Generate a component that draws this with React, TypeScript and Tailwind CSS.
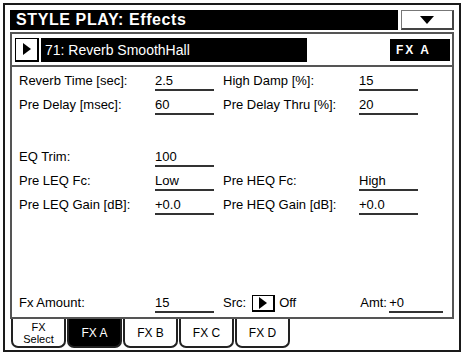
import React from "react";

const font = { fontFamily: '"Liberation Sans", Arial, sans-serif' };

function Field({ label, value }: { label: string; value: string }) {
  return (
    <>
      <div className="w-[136px] shrink-0">{label}</div>
      <div className="w-[59px] shrink-0 h-[20px] border-b-2 border-[#333] leading-[20px]">{value}</div>
    </>
  );
}

function Row({ a, b }: { a: [string, string]; b?: [string, string] }) {
  return (
    <div className="flex items-start h-[24px]">
      <Field label={a[0]} value={a[1]} />
      {b && (
        <div className="flex ml-[9px]">
          <Field label={b[0]} value={b[1]} />
        </div>
      )}
    </div>
  );
}

function PlayBox({ className = "" }: { className?: string }) {
  return (
    <div className={`flex items-center justify-center bg-white border border-black border-r-2 border-b-2 ${className}`}>
      <svg width="8" height="12" viewBox="0 0 8 12">
        <polygon points="0,0 8,6 0,12" fill="#000" />
      </svg>
    </div>
  );
}

const tabs = ["FX Select", "FX A", "FX B", "FX C", "FX D"];

export default function App() {
  return (
    <div className="w-[464px] h-[356px] bg-white pt-[3px] pl-[3px]" style={font}>
      <div className="w-[458px] h-[349px] border-2 border-[#1a1a1a] px-[5px] pt-[5px] flex flex-col text-[13px] text-black">
        {/* title bar */}
        <div className="flex h-[20px] shrink-0">
          <div className="flex-1 bg-black text-white font-bold text-[16px] tracking-[0.6px] leading-[20px] pl-[6px]">
            STYLE PLAY: Effects
          </div>
          <div className="w-[53px] bg-white border border-[#777] border-r-2 border-b-2 border-r-[#444] border-b-[#444] flex items-center justify-center ml-[3px]">
            <svg width="14" height="8" viewBox="0 0 14 8">
              <polygon points="0,0 14,0 7,8" fill="#000" />
            </svg>
          </div>
        </div>

        {/* effect name row */}
        <div className="mt-[2px] h-[35px] shrink-0 border-2 border-[#555] flex items-center pl-[3px] pr-[2px]">
          <PlayBox className="w-[24px] h-[24px]" />
          <div className="ml-[2px] w-[266px] h-[24px] bg-black text-white text-[14px] leading-[24px] pl-[4px]">
            71: Reverb SmoothHall
          </div>
          <div className="ml-auto w-[60px] h-[22px] bg-black text-white font-bold text-[12px] tracking-[2px] leading-[22px] pl-[6px]">
            FX A
          </div>
        </div>

        {/* parameters panel */}
        <div className="h-[252px] shrink-0 border-2 border-t-0 border-[#555] flex flex-col pl-[7px] pt-[4px]">
          <Row a={["Reverb Time [sec]:", "2.5"]} b={["High Damp [%]:", "15"]} />
          <Row a={["Pre Delay [msec]:", "60"]} b={["Pre Delay Thru [%]:", "20"]} />
          <div className="h-[28px]" />
          <Row a={["EQ Trim:", "100"]} />
          <Row a={["Pre LEQ Fc:", "Low"]} b={["Pre HEQ Fc:", "High"]} />
          <Row a={["Pre LEQ Gain [dB]:", "+0.0"]} b={["Pre HEQ Gain [dB]:", "+0.0"]} />
          <div className="flex-1" />
          <div className="flex items-start h-[24px]">
            <Field label="Fx Amount:" value="15" />
            <div className="ml-[9px] leading-[20px]">Src:</div>
            <PlayBox className="ml-[6px] w-[23px] h-[17px] mt-[2px]" />
            <div className="ml-[4px] leading-[20px]">Off</div>
            <div className="ml-[64px] leading-[20px] w-[29px]">Amt:</div>
            <div className="w-[54px] h-[20px] border-b-2 border-[#333] leading-[20px]">+0</div>
          </div>
        </div>

        {/* tabs */}
        <div className="flex gap-[1px] h-[29px] shrink-0 pl-[1px]">
          {tabs.map((t, i) => {
            const on = i === 1;
            const two = t === "FX Select";
            return (
              <div
                key={t}
                className={`w-[55px] border-2 border-t-0 border-[#222] rounded-b-[7px] flex flex-col items-center justify-center ${
                  on ? "bg-black text-white" : "bg-white text-black"
                } ${two ? "text-[11px] leading-[12px]" : "text-[12px]"}`}
              >
                {two ? (
                  <>
                    <span>FX</span>
                    <span>Select</span>
                  </>
                ) : (
                  <span>{t}</span>
                )}
              </div>
            );
          })}
        </div>
      </div>
    </div>
  );
}
